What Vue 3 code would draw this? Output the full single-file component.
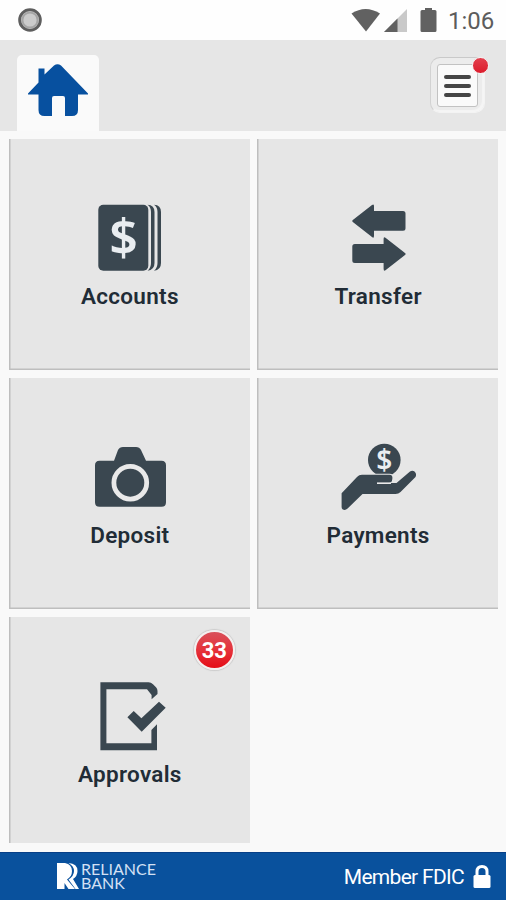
<script setup>
import { ref } from "vue";

const time = ref('1:06');
const tiles = ref([
  { id: 'accounts', label: 'Accounts' },
  { id: 'transfer', label: 'Transfer' },
  { id: 'deposit', label: 'Deposit' },
  { id: 'payments', label: 'Payments' },
  { id: 'approvals', label: 'Approvals', badge: 33 },
]);
</script>

<template>
  <div class="screen">
    <div class="status">
      <svg class="record" width="24" height="24" viewBox="0 0 24 24">
        <circle cx="12" cy="12" r="10.4" fill="#c4c4c4" stroke="#5e5e5e" stroke-width="2.8" />
        <circle cx="12" cy="12" r="7.6" fill="#cbcbcb" stroke="#a5a5a5" stroke-width="2" />
      </svg>
      <svg width="90" height="26" viewBox="0 0 90 26">
        <path d="M1.5 6.500Q15.500-2.500 30 6.500L16 24.500Z" fill="#616161" />
        <path d="M57 2V25H34Z" fill="#c9c9c9" />
        <path d="M47.500 11.500V25H34Z" fill="#616161" />
        <path d="M75 1h7v2h3q1.500 0 1.500 1.500v19q0 1.500-1.500 1.500h-13q-1.500 0-1.500-1.500v-19q0-1.500 1.500-1.500h3z" fill="#616161" />
      </svg>
      <span class="time">{{ time }}</span>
    </div>

    <header class="header">
      <button class="home">
        <svg width="60" height="53" viewBox="0 0 60 53">
          <path d="M0 29.500L10.500 18.500V4.500H16.500V10.500L26 1.500Q29.500-1 33 1.500L60 29.500V30.500H50V46Q50 52 44 52H37V34Q37 32 35 32H26Q24 32 24 34V52H16.500Q10.500 52 10.500 46V30.500H0Z" fill="#07509f" />
        </svg>
      </button>
      <button class="menu">
        <span class="menu-face">
          <i></i><i></i><i></i>
        </span>
        <b class="dot"></b>
      </button>
    </header>

    <main class="grid">
      <button v-for="tile in tiles" :key="tile.id" class="tile">
        <svg class="icon" width="84" height="72" viewBox="0 0 84 72">
          <g v-if="tile.id === 'accounts'">
            <rect x="11.300" y="1.700" width="50" height="66" rx="5" />
            <path d="M60.500 1.700Q67.500 2 67.500 9V60Q67.500 67 60.500 67.700Q64 65 64 60V9Q64 4 60.500 1.700Z" />
            <path d="M67 1.700Q74 2 74 9V60Q74 67 67 67.700Q70.500 65 70.500 60V9Q70.500 4 67 1.700Z" />
            <text class="dollar" x="36.500" y="52">$</text>
          </g>
          <g v-else-if="tile.id === 'transfer'">
            <path d="M16.800 17L36 2Q38 .5 38 3V8H67Q69.500 8 69.500 10.500V25.200Q69.500 27.700 67 27.700H38V32.500Q38 36 36 34L16.800 19Q15.500 18 16.800 17Z" />
            <path d="M69 50L49.800 35Q47.600 33 47.600 36V41H18.800Q16.300 41 16.300 43.500V57.500Q16.300 60 18.800 60H47.600V65.500Q47.600 69 49.800 67L69 52Q70.300 51 69 50Z" />
          </g>
          <g v-else-if="tile.id === 'deposit'">
            <path d="M12.500 18.700H27L31 8Q32.500 5 36 5H49Q52.500 5 54 8L59 18.700H74.500Q79 18.700 79 23.200V60.200Q79 64.700 74.500 64.700H12.500Q8 64.700 8 60.200V23.200Q8 18.700 12.500 18.700Z" />
            <circle class="light-line" cx="43.300" cy="40.700" r="16.400" stroke-width="4.800" />
          </g>
          <g v-else-if="tile.id === 'payments'">
            <circle cx="48.300" cy="18" r="16.300" />
            <text class="coin" x="48.300" y="27.500">$</text>
            <path class="palm" d="M5.600 51.300L21 35Q23 32.800 26 32.800H53.500Q57 32.800 56.300 37Q56 41 53 41H60.500L74 29.500Q76.500 27.700 78.800 29.800Q81 32 79.500 35L64.500 50Q62.500 52 59.500 52H26.500L11.600 66.500Q9 69 6.500 67.200Q5.600 66.500 5.600 65Z" />
            <path class="light-line" d="M41 41.200H55" stroke-width="1.600" />
          </g>
          <g v-else>
            <path d="M13.400 1.300H61.500Q64 1.300 66 3.300L69 6.300Q70.500 8 70.500 10V13L64.600 18.300V14L60 8.300H19.400V62.300H64.400V49L70 43.300V69.300H13.400Z" />
            <path d="M40.400 36.300L46.700 30L54.400 37.300L72 20.700L78.700 26.700L54.700 50.700Z" />
          </g>
        </svg>
        <span class="label">{{ tile.label }}</span>
        <span v-if="tile.badge" class="badge">{{ tile.badge }}</span>
      </button>
    </main>

    <footer class="footer">
      <div class="brand">
        <svg width="22" height="26" viewBox="0 0 22 26">
          <path d="M0 0H8Q15 1.500 15 8Q15 13.500 10 16.500L18 26H11.500L7.500 20V26H0Z" fill="#fff" />
          <path d="M11.500 0Q20.500 .5 20.500 8Q20.500 13 16 16L22 26H18.500L11.500 16.500Q17 13 17 8Q17 3 11.500 0Z" fill="#fff" />
        </svg>
        <div class="brand-name">
          <span>RELIANCE</span>
          <span>BANK</span>
        </div>
      </div>
      <div class="fdic">
        <span>Member FDIC</span>
        <svg width="18" height="24" viewBox="0 0 18 24">
          <path d="M4 11V6.500Q4 1.500 9 1.500T14 6.500V11" fill="none" stroke="#fff" stroke-width="3" />
          <rect x="0.500" y="10" width="17" height="13" rx="1.500" fill="#fff" />
        </svg>
      </div>
    </footer>
  </div>
</template>

<style>
  body {
    margin: 0;
    background-color: #f9f9f9;
  }
</style>

<style scoped>
  .screen {
    display: flex;
    flex-direction: column;
    width: 506px;
    height: 900px;
    overflow: hidden;
    background-color: #f9f9f9;
    font-family: Roboto, "Liberation Sans", sans-serif;
  }

  button {
    border: 0;
    padding: 0;
    font: inherit;
  }

  .status {
    display: flex;
    align-items: center;
    box-sizing: border-box;
    height: 40px;
    padding: 0 12px 0 18px;
    background-color: #fefefe;
  }

  .record {
    margin-right: auto;
  }

  .time {
    width: 46px;
    margin-left: 8px;
    font-size: 24px;
    line-height: 40px;
    color: #5c5c5c;
    white-space: nowrap;
    padding-top: 2px;
  }

  .header {
    display: flex;
    justify-content: space-between;
    box-sizing: border-box;
    height: 91px;
    padding: 15px 21px 0 17px;
    background-color: #e6e6e6;
  }

  .home {
    display: flex;
    justify-content: center;
    width: 82px;
    height: 76px;
    padding-top: 9px;
    border-radius: 5px 5px 0 0;
    background-color: #fafafa;
  }

  .menu {
    position: relative;
    box-sizing: border-box;
    width: 55px;
    height: 56px;
    margin-top: 2px;
    padding: 6px;
    border-radius: 10px;
    background-color: #ececec;
    border: 1px solid #f3f3f3;
    border-top-color: #c9c9c9;
    border-left-color: #d2d2d2;
    box-shadow: inset -2px -2px 1px #f5f5f5;
  }

  .menu-face {
    display: flex;
    flex-direction: column;
    align-items: center;
    justify-content: center;
    gap: 5px;
    box-sizing: border-box;
    width: 41px;
    height: 43px;
    border-radius: 3px;
    background-color: #fafafa;
    border: 1px solid #c2c2c2;
  }

  .menu-face i {
    width: 27px;
    height: 4px;
    border-radius: 2px;
    background-color: #454545;
  }

  .dot {
    position: absolute;
    top: -1px;
    right: -5px;
    width: 15px;
    height: 15px;
    border: 1px solid #f6f0f0;
    border-radius: 50%;
    background: linear-gradient(#e33f4d, #dc1c2c);
  }

  .grid {
    display: grid;
    grid-template-columns: 1fr 1fr;
    grid-template-rows: 231px 231px 226px;
    gap: 8px 7.5px;
    padding: 8px 8px 9px 9px;
  }

  .tile {
    position: relative;
    display: flex;
    flex-direction: column;
    align-items: center;
    box-sizing: border-box;
    padding-top: 64px;
    background-color: #e6e6e6;
    box-shadow: inset 1.5px 0 0 #bebebe, inset 0 -1.5px 0 #bebebe;
  }

  .tile:last-child {
    box-shadow: inset 1.5px 0 0 #bebebe;
  }

  .icon {
    flex: none;
    overflow: visible;
    fill: #3a4750;
  }

  .dollar, .coin {
    fill: #e9edf0;
    font-family: "Noto Sans", sans-serif;
    font-weight: 600;
    text-anchor: middle;
  }

  .dollar {
    font-size: 50px;
  }

  .coin {
    font-size: 28px;
  }

  .light-line {
    fill: none;
    stroke: #e9e9e9;
  }

  .palm {
    stroke: #e6e6e6;
    stroke-width: 2px;
    paint-order: stroke;
  }

  .label {
    margin-top: 8px;
    padding-left: 1px;
    font-size: 22.5px;
    line-height: 26px;
    font-weight: 600;
    letter-spacing: 0.3px;
    color: #212c36;
  }

  .badge {
    position: absolute;
    top: 13px;
    right: 15px;
    width: 37px;
    height: 36px;
    border: 2px solid #f4efef;
    border-radius: 50%;
    background: linear-gradient(#d9505a, #e5323b 50%, #e50c16);
    box-shadow: 0 0 1px 1px #ccc;
    color: #fff;
    font-size: 22px;
    font-weight: 700;
    line-height: 37px;
    text-align: center;
  }

  .footer {
    display: flex;
    align-items: center;
    justify-content: space-between;
    box-sizing: border-box;
    height: 48px;
    padding: 0 15px 0 57px;
    border-top: 1px solid #073f87;
    background-color: #09519d;
    color: #fff;
  }

  .brand {
    display: flex;
    gap: 2px;
  }

  .brand-name {
    display: flex;
    flex-direction: column;
    font-family: Lato, sans-serif;
    font-size: 16px;
    line-height: 14px;
    margin-top: -1px;
    color: #d3e0f4;
  }

  .fdic {
    display: flex;
    align-items: center;
    gap: 9px;
    font-size: 21px;
    letter-spacing: -0.7px;
  }
</style>
